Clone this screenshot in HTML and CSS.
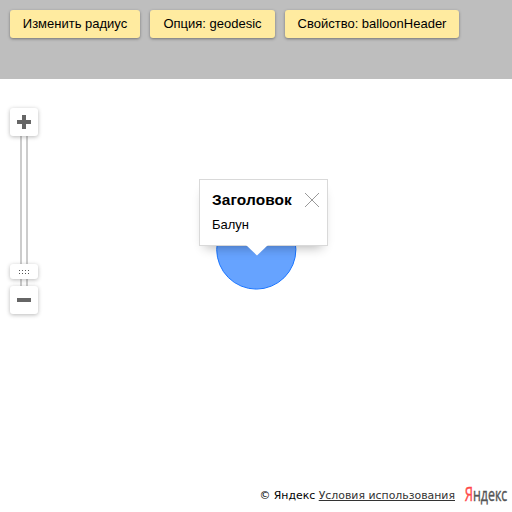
FILE: index.html
```
<!DOCTYPE html>
<html lang="ru">
<head>
<meta charset="utf-8">
<title>Круг на карте</title>
<link rel="stylesheet" href="styles.css">
</head>
<body>
<header class="toolbar">
  <button class="btn btn-radius">Изменить радиус</button>
  <button class="btn btn-option">Опция: geodesic</button>
  <button class="btn btn-property">Свойство: balloonHeader</button>
</header>
<main class="map">
  <div class="zoom">
    <button class="zoom-btn" aria-label="Приблизить"><svg width="14" height="14"><path d="M5 0h4v5h5v4H9v5H5V9H0V5h5z" fill="#666"/></svg></button>
    <div class="zoom-track"><div class="zoom-handle"><svg width="10" height="4" fill="#555" shape-rendering="crispEdges"><path d="M0 0h1v1H0zM3 0h1v1H3zM6 0h1v1H6zM9 0h1v1H9zM0 3h1v1H0zM3 3h1v1H3zM6 3h1v1H6zM9 3h1v1H9z"/></svg></div></div>
    <button class="zoom-btn" aria-label="Отдалить"><svg width="14" height="14"><path d="M0 5h14v4H0z" fill="#666"/></svg></button>
  </div>
  <svg class="circle" width="82" height="82"><circle cx="41.3" cy="40.5" r="39.6" fill="#66a3ff" stroke="#1a75ff"/></svg>
  <section class="balloon">
    <h1 class="balloon-title">Заголовок</h1>
    <p class="balloon-text">Балун</p>
    <svg class="balloon-close" width="14" height="14"><path d="M0 0L14 14M14 0L0 14" stroke="#999" fill="none"/></svg>
    <svg class="balloon-tail" width="22" height="11"><path d="M0 0h22L11 10.5z" fill="#fff"/></svg>
  </section>
  <footer class="copyright">
    <span class="terms">© Яндекс <a class="terms-link">Условия использования</a></span>
    <svg class="logo" width="43" height="24"><text x="-0.3" y="17" font-size="19.5" textLength="8.3" lengthAdjust="spacingAndGlyphs" fill="#ff4848" stroke="#ff4848">Я</text><text x="8" y="17" font-size="17.5" textLength="34.3" lengthAdjust="spacingAndGlyphs" fill="#555" stroke="#555">ндекс</text></svg>
  </footer>
</main>
</body>
</html>
```
FILE: styles.css
```
* { box-sizing: border-box; }
body {
  margin: 0;
  height: 512px;
  overflow: hidden;
  display: flex;
  flex-direction: column;
  background: #fff;
  color: #000;
  font: 13px "Liberation Sans", Arial, sans-serif;
}
svg { display: block; }
button { margin: 0; padding: 0; border: 0; font: inherit; color: inherit; }
.toolbar {
  display: flex;
  align-items: flex-start;
  gap: 10px;
  height: 79px;
  padding: 10px;
  background: #bebebe;
}
.btn {
  height: 28px;
  padding-bottom: 2px;
  border-radius: 3px;
  background: #ffeba0;
  box-shadow: 0 1px 3px rgba(0, 0, 0, .4);
  white-space: nowrap;
}
.btn-radius { width: 130px; }
.btn-option { width: 125px; }
.btn-property { width: 174px; }
.map { position: relative; flex: 1; }
.zoom {
  position: absolute;
  left: 10px;
  top: 29px;
  width: 28px;
  display: flex;
  flex-direction: column;
}
.zoom-btn {
  position: relative;
  height: 28px;
  display: flex;
  align-items: center;
  justify-content: center;
  background: #fff;
  border-radius: 3px;
  box-shadow: 0 1px 4px rgba(0, 0, 0, .28);
}
.zoom-track {
  height: 150px;
  width: 8px;
  margin: 0 auto;
  border: solid #ccc;
  border-width: 0 2px;
  display: flex;
  align-items: flex-end;
  justify-content: center;
  padding-bottom: 7px;
}
.zoom-handle {
  flex: none;
  width: 28px;
  height: 15px;
  display: flex;
  align-items: center;
  justify-content: center;
  background: #fff;
  border-radius: 3px;
  box-shadow: 0 1px 4px rgba(0, 0, 0, .28);
}
.circle { position: absolute; left: 215px; top: 130px; }
.balloon {
  position: absolute;
  left: 199px;
  top: 100px;
  width: 129px;
  height: 67px;
  padding: 11px 12px;
  background: #fff;
  border: 1px solid #d9d9d9;
  box-shadow: 0 7px 11px -6px rgba(0, 0, 0, .32);
}
.balloon-title { margin: 0; font-size: 15.45px; line-height: 18px; letter-spacing: .1px; }
.balloon-text { margin: 8px 0 0; line-height: 16px; }
.balloon-close { position: absolute; left: 105px; top: 13px; }
.balloon-tail { position: absolute; left: 46px; top: 65px; }
.copyright {
  position: absolute;
  right: 4px;
  bottom: 4px;
  display: flex;
  align-items: center;
  gap: 10px;
}
.terms {
  font: 10.9px/16px "DejaVu Sans", Verdana, sans-serif;
  white-space: nowrap;
}
.terms-link { color: #333; text-decoration: underline; }
.logo {
  overflow: visible;
  font-family: "Open Sans", "Noto Sans", sans-serif;
  stroke-width: .4px;
}
```
